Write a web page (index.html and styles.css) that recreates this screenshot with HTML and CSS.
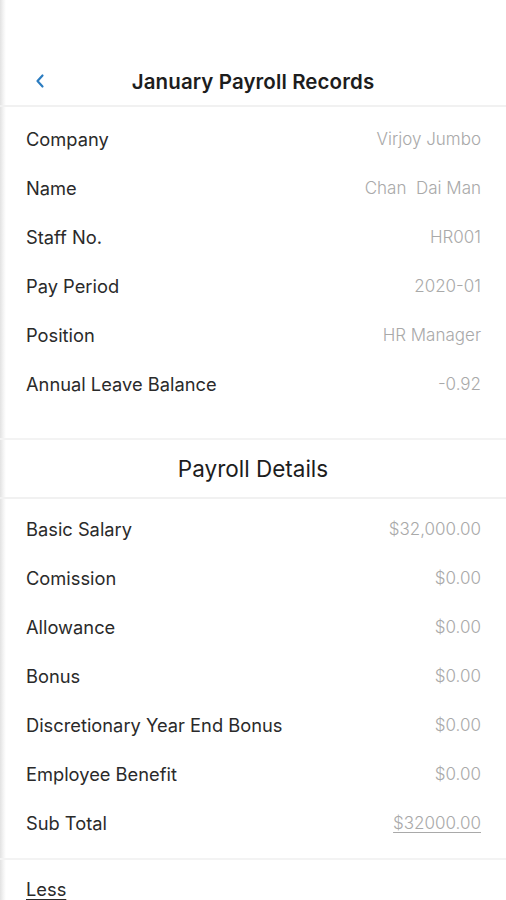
FILE: index.html
```html
<!DOCTYPE html>
<html>
<head>
<meta charset="utf-8">
<link rel="stylesheet" href="styles.css">
</head>
<body>
<div class="screen">
  <header class="topbar">
    <span class="back"><svg width="12" height="16" viewBox="0 0 12 16"><path d="M8.5 2.5 L3.5 8 L8.5 13.5" fill="none" stroke="#2b7cc0" stroke-width="2.2" stroke-linecap="round" stroke-linejoin="round"/></svg></span>
    <h1 class="title">January Payroll Records</h1>
  </header>
  <section class="info">
    <div class="row"><span class="label">Company</span><span class="value">Virjoy Jumbo</span></div>
    <div class="row"><span class="label">Name</span><span class="value">Chan&nbsp; Dai Man</span></div>
    <div class="row"><span class="label">Staff No.</span><span class="value">HR001</span></div>
    <div class="row"><span class="label">Pay Period</span><span class="value">2020-01</span></div>
    <div class="row"><span class="label">Position</span><span class="value">HR Manager</span></div>
    <div class="row"><span class="label">Annual Leave Balance</span><span class="value">-0.92</span></div>
  </section>
  <h2 class="section-title">Payroll Details</h2>
  <section class="details">
    <div class="row"><span class="label">Basic Salary</span><span class="value">$32,000.00</span></div>
    <div class="row"><span class="label">Comission</span><span class="value">$0.00</span></div>
    <div class="row"><span class="label">Allowance</span><span class="value">$0.00</span></div>
    <div class="row"><span class="label">Bonus</span><span class="value">$0.00</span></div>
    <div class="row"><span class="label">Discretionary Year End Bonus</span><span class="value">$0.00</span></div>
    <div class="row"><span class="label">Employee Benefit</span><span class="value">$0.00</span></div>
    <div class="row"><span class="label">Sub Total</span><span class="value underline">$32000.00</span></div>
  </section>
  <div class="less"><span class="label underline">Less</span></div>
</div>
</body>
</html>
```
FILE: styles.css
```css
* { box-sizing: border-box; margin: 0; padding: 0; }
html, body { background: #fff; }
body {
  font-family: Inter, Roboto, "Noto Sans", sans-serif;
  color: #222;
  height: 900px;
  overflow: hidden;
}
.screen {
  min-height: 900px;
  padding-top: 59px;
  background: linear-gradient(to right, #e2e2e2 0px, #f2f2f2 3px, #fff 6px);
}
.topbar {
  position: relative;
  height: 48px;
  display: flex;
  align-items: center;
  justify-content: center;
  border-bottom: 2px solid #f1f1f1;
}
.back {
  position: absolute;
  left: 34px;
  top: 14px;
  display: flex;
}
.title {
  font-size: 20.5px;
  font-weight: 600;
  color: #1d1d1d;
  letter-spacing: 0.1px;
  margin-top: -2px;
}
.info {
  padding: 7px 25px 30px 26px;
  border-bottom: 2px solid #f3f3f3;
}
.row {
  height: 49px;
  display: flex;
  align-items: center;
  justify-content: space-between;
}
.label {
  font-size: 18.3px;
  color: #2a2a2a;
  font-weight: 400;
}
.value {
  font-size: 17px;
  color: #a9a9a9;
  font-weight: 300;
}
.underline { text-decoration: underline; text-underline-offset: 3px; }
.section-title {
  height: 59px;
  display: flex;
  align-items: center;
  justify-content: center;
  font-size: 22.5px;
  font-weight: 400;
  color: #1d1d1d;
  border-bottom: 2px solid #f1f1f1;
}
.details {
  padding: 5px 25px 11px 26px;
  border-bottom: 2px solid #f3f3f3;
}
.less {
  padding: 18px 26px 0;
}
```
